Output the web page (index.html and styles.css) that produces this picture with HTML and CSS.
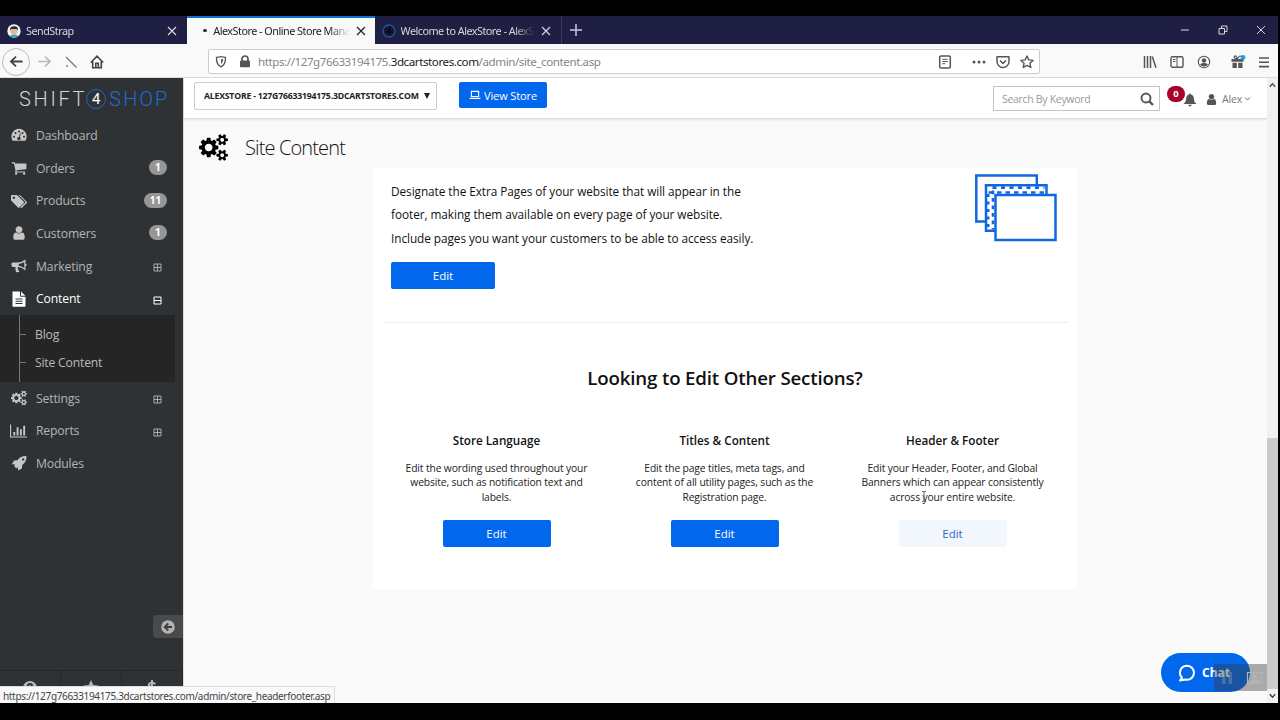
FILE: index.html
```html
<!DOCTYPE html>
<html lang="en">
  <head>
    <meta charset="UTF-8" />
    <meta name="viewport" content="width=device-width, initial-scale=1.0" />
    <title>AlexStore - Online Store Manager</title>
    <link rel="stylesheet" href="styles.css">
  </head>
  <body>
    <svg class="symbols">
      <symbol id="user" viewBox="0 0 1792 1792"><path d="M1536 1399q0 109-62.5 187t-150.5 78h-854q-88 0-150.5-78t-62.5-187q0-85 8.5-160.5t31.5-152 58.5-131 94-89 134.5-34.5q131 128 313 128t313-128q76 0 134.5 34.5t94 89 58.5 131 31.5 152 8.5 160.5zm-256-887q0 159-112.5 271.5t-271.5 112.5-271.5-112.5-112.5-271.5 112.5-271.5 271.5-112.5 271.5 112.5 112.5 271.5z"/></symbol>
      <symbol id="cart" viewBox="0 0 1792 1792"><path d="M704 1536q0 52-38 90t-90 38-90-38-38-90 38-90 90-38 90 38 38 90zm896 0q0 52-38 90t-90 38-90-38-38-90 38-90 90-38 90 38 38 90zm128-1088v512q0 24-16.5 42.5t-40.5 21.5l-1044 122q13 60 13 70 0 16-24 64h920q26 0 45 19t19 45-19 45-45 19h-1024q-26 0-45-19t-19-45q0-11 8-31.5t16-36 21.5-40 15.5-29.5l-177-823h-204q-26 0-45-19t-19-45 19-45 45-19h256q16 0 28.5 6.5t19.5 15.5 13 24.5 8 26 5.5 29.5 4.5 26h1201q26 0 45 19t19 45z"/></symbol>
      <symbol id="cogs" viewBox="0 0 1920 1792"><path d="M896 896q0-106-75-181t-181-75-181 75-75 181 75 181 181 75 181-75 75-181zm768 512q0-52-38-90t-90-38-90 38-38 90q0 53 37.5 90.5t90.5 37.5 90.5-37.5 37.5-90.5zm0-1024q0-52-38-90t-90-38-90 38-38 90q0 53 37.5 90.5t90.5 37.5 90.5-37.5 37.5-90.5zm-384 421v185q0 10-7 19.5t-16 10.5l-155 24q-11 35-32 76 34 48 90 115 7 11 7 20 0 12-7 19-23 30-82.5 89.5t-78.5 59.5q-11 0-21-7l-115-90q-37 19-77 31-11 108-23 155-7 24-30 24h-186q-11 0-20-7.5t-10-17.5l-23-153q-34-10-75-31l-118 89q-7 7-20 7-11 0-21-8-144-133-144-160 0-9 7-19 10-14 41-53t47-61q-23-44-35-82l-152-24q-10-1-17-9.5t-7-19.5v-185q0-10 7-19.5t16-10.5l155-24q11-35 32-76-34-48-90-115-7-11-7-20 0-12 7-20 22-30 82-89t79-59q11 0 21 7l115 90q34-18 77-32 11-108 23-154 7-24 30-24h186q11 0 20 7.5t10 17.5l23 153q34 10 75 31l118-89q8-7 20-7 11 0 21 8 144 133 144 160 0 8-7 19-12 16-42 54t-45 60q23 48 34 82l152 23q10 2 17 10.5t7 19.5zm640 533v140q0 16-149 31-12 27-30 52 51 113 51 138 0 4-4 7-122 71-124 71-8 0-46-47t-52-68q-20 2-30 2t-30-2q-14 21-52 68t-46 47q-2 0-124-71-4-3-4-7 0-25 51-138-18-25-30-52-149-15-149-31v-140q0-16 149-31 13-29 30-52-51-113-51-138 0-4 4-7 4-2 35-20t59-34 30-16q8 0 46 46.5t52 67.5q20-2 30-2t30 2q51-71 92-112l6-2q4 0 124 70 4 3 4 7 0 25-51 138 17 23 30 52 149 15 149 31zm0-1024v140q0 16-149 31-12 27-30 52 51 113 51 138 0 4-4 7-122 71-124 71-8 0-46-47t-52-68q-20 2-30 2t-30-2q-14 21-52 68t-46 47q-2 0-124-71-4-3-4-7 0-25 51-138-18-25-30-52-149-15-149-31v-140q0-16 149-31 13-29 30-52-51-113-51-138 0-4 4-7 4-2 35-20t59-34 30-16q8 0 46 46.5t52 67.5q20-2 30-2t30 2q51-71 92-112l6-2q4 0 124 70 4 3 4 7 0 25-51 138 17 23 30 52 149 15 149 31z"/></symbol>
      <symbol id="close" viewBox="0 0 10 10"><path d="M1 1l8 8M9 1L1 9" fill="none" stroke="currentColor" stroke-width="1.2"/></symbol>
      <symbol id="plus-box" viewBox="0 0 9 9"><path d="M1 1h7v7H1zM1 4.5h7M4.5 1v7" fill="none" stroke="currentColor" stroke-width=".9"/></symbol>
      <symbol id="minus-box" viewBox="0 0 9 9"><path d="M1 1h7v7H1zM1 4.5h7" fill="none" stroke="currentColor" stroke-width="1"/></symbol>
    </svg>

    <div class="browser">
      <div class="tabs">
        <div class="tab">
          <svg class="favicon" viewBox="0 0 14 14"><circle cx="7" cy="7" r="6.7" fill="#f4f4f4"/><path d="M2.5 12Q7 8.5 11.5 12 9.5 13.7 7 13.7T2.5 12z" fill="#3aa6b8"/><circle cx="7" cy="7" r="3.4" fill="#e8b795"/><path d="M3 7Q2.3 2.3 7 2.2T11 7L10 5H4z" fill="#2a2a30"/></svg>
          <span class="tab-title">SendStrap</span>
          <svg class="tab-close"><use href="#close"/></svg>
        </div>
        <div class="tab active">
          <span class="loading-dot"></span>
          <span class="tab-title">AlexStore - Online Store Manag</span>
          <svg class="tab-close"><use href="#close"/></svg>
        </div>
        <div class="tab">
          <svg class="favicon" viewBox="0 0 14 14"><circle cx="7" cy="7" r="6" fill="#17182f" stroke="#1c55ae" stroke-width="1.3"/><path d="M8 10.5V3.5L5 8.3h4.5" fill="none" stroke="#080812" stroke-width="1.2"/></svg>
          <span class="tab-title">Welcome to AlexStore - AlexSt</span>
          <svg class="tab-close"><use href="#close"/></svg>
        </div>
        <svg class="new-tab" viewBox="0 0 12 12"><path d="M6 0v12M0 6h12" stroke="#c9c9d2" stroke-width="1.5"/></svg>
        <div class="window-buttons">
          <svg viewBox="0 0 10 10"><path d="M1 5h8" stroke="#d6d6de"/></svg>
          <svg viewBox="0 0 10 10"><path d="M1 3.5h5.5V9H1zM3.5 3.5V1H9v5.5H6.500" fill="none" stroke="#d6d6de"/></svg>
          <svg viewBox="0 0 10 10"><path d="M1 1l8 8M9 1L1 9" stroke="#d6d6de"/></svg>
        </div>
      </div>

      <div class="toolbar">
        <div class="nav-buttons">
          <span class="back"><svg viewBox="0 0 16 16"><path d="M14.5 8H2M7.5 2.800L2 8l5.500 5.200" fill="none" stroke="#444" stroke-width="1.900"/></svg></span>
          <svg class="forward" viewBox="0 0 16 16"><path d="M1.5 8H14M8.5 2.800L14 8l-5.500 5.200" fill="none" stroke="#b8b8b8" stroke-width="1.700"/></svg>
          <svg class="stop" viewBox="0 0 14 14"><path d="M2 2l10.500 10.500" stroke="#777" stroke-width="1.300"/><circle cx="3" cy="11" r=".9" fill="#777"/></svg>
          <svg class="home" viewBox="0 0 14 14"><path d="M.8 7.500L7 1.200l6.200 6.300M2.700 6.500v6.200h8.600V6.500M5.800 12.500V8.300h2.500v4.200" fill="none" stroke="#444" stroke-width="1.600"/></svg>
        </div>
        <div class="address">
          <svg class="shield" viewBox="0 0 12 12"><path d="M1.500 1.800Q4 1.800 6 1q2 .8 4.500.8Q10.900 9 6 11.300 1.100 9 1.500 1.800z" fill="none" stroke="#555" stroke-width="1.300"/><path d="M6 3.500v5Q8 7 8.300 3.800z" fill="#555"/></svg>
          <svg class="lock" viewBox="0 0 12 13"><path d="M3 6V4a3 3 0 0 1 6 0v2" fill="none" stroke="#555" stroke-width="1.700"/><rect x="1" y="5.500" width="10" height="6.800" rx="1" fill="#555"/></svg>
          <span class="url">https://127g76633194175.<b>3dcartstores.com</b>/admin/site_content.asp</span>
          <div class="address-icons">
            <svg viewBox="0 0 14 14"><rect x="1.700" y="1" width="10.600" height="12" rx="1.300" fill="none" stroke="#555" stroke-width="1.500"/><path d="M4.300 4.300h5.400M4.300 6.500h5.400M4.300 8.700h3" stroke="#555"/></svg>
            <svg viewBox="0 0 14 14" class="dots"><circle cx="2" cy="7" r="1.500"/><circle cx="7" cy="7" r="1.500"/><circle cx="12" cy="7" r="1.500"/></svg>
            <svg viewBox="0 0 14 14"><path d="M1 1.800h12v4.700a6 6 0 0 1-12 0zM4 5.500l3 3 3-3" fill="none" stroke="#555" stroke-width="1.500" stroke-linejoin="round"/></svg>
            <svg viewBox="0 0 14 14"><path d="M7 1l1.800 3.900 4.300.5-3.200 2.900.9 4.200L7 10.400l-3.800 2.100.9-4.200L.9 5.400l4.300-.5z" fill="none" stroke="#555" stroke-width="1.400" stroke-linejoin="round"/></svg>
          </div>
        </div>
        <div class="browser-icons">
          <svg viewBox="0 0 14 14"><path d="M1.500 1v12M4.500 1v12M7.500 1v12M9.300 1.500l3.700 11.300" fill="none" stroke="#555" stroke-width="1.500"/></svg>
          <svg viewBox="0 0 14 14"><rect x="1" y="1.700" width="12" height="10.600" rx="1.500" fill="none" stroke="#555" stroke-width="1.400"/><path d="M7 2v10M3 4.500h2.500M3 6.500h2.500" stroke="#555"/></svg>
          <svg viewBox="0 0 14 14"><circle cx="7" cy="7" r="5.700" fill="none" stroke="#555" stroke-width="1.100"/><circle cx="7" cy="5.500" r="2.200" fill="#555"/><path d="M3 9.200q4-2.200 8 0Q9.800 11.500 7 11.500T3 9.200z" fill="#555"/></svg>
          <svg viewBox="0 0 16 14" class="gift"><path d="M1.500 4h12v2.800h-12zM2.500 7.800h4.300V13H2.500zM8.200 7.800h4.300V13H8.200z" fill="#555"/><path d="M7.500 4Q3 3 4.500 1.300T7.500 4q2-4 3.400-2.500" fill="none" stroke="#555" stroke-width="1.200"/><circle cx="13" cy="2.400" r="2.400" fill="#1a9fe8"/></svg>
          <svg viewBox="0 0 14 14"><path d="M2 3h10M2 7.300h10M2 11.600h10" stroke="#555" stroke-width="1.600"/></svg>
        </div>
      </div>

      <div class="page">
        <aside class="sidebar">
          <div class="logo"><span>SHIFT</span><i>4</i><span class="blue">SHOP</span></div>
          <nav class="menu">
            <a class="menu-item">
              <svg class="menu-icon" viewBox="0 0 16 16"><path d="M1.800 13.800A7.600 7.600 0 1 1 14.200 13.800z"/><g fill="#2f3234"><circle cx="3" cy="9.700" r="1"/><circle cx="4.500" cy="6" r="1"/><circle cx="8" cy="4.400" r="1"/><circle cx="11.500" cy="6" r="1"/><circle cx="13" cy="9.700" r="1"/></g><path d="M8 11.700L9.400 6.500" stroke="#2f3234" stroke-width="1"/><circle cx="7.900" cy="11.600" r="1.700" fill="#2f3234"/></svg>
              <span>Dashboard</span>
            </a>
            <a class="menu-item">
              <svg class="menu-icon"><use href="#cart"/></svg>
              <span>Orders</span><b class="count">1</b>
            </a>
            <a class="menu-item">
              <svg class="menu-icon" viewBox="0 0 16 16"><path fill-rule="evenodd" d="M0 2.700Q0 2 .8 2h4.500q.8 0 1.500.7l6 6q.7.700 0 1.400l-4.400 4.500q-.7.700-1.400 0L.8 8.300Q0 7.500 0 6.700zM2.900 3.500a1.200 1.200 0 1 0 .01 0z"/><path d="M7.500 2h.8q.7 0 1.400.7l6 6q.7.700 0 1.400l-4.500 4.500q-.6.600-1.300.2l-.5-.5 4.800-4.700q.5-.6 0-1.100z"/></svg>
              <span>Products</span><b class="count">11</b>
            </a>
            <a class="menu-item">
              <svg class="menu-icon"><use href="#user"/></svg>
              <span>Customers</span><b class="count">1</b>
            </a>
            <a class="menu-item">
              <svg class="menu-icon" viewBox="0 0 16 16"><path fill-rule="evenodd" d="M14.500 1.500v4q1.200.2 1.200 1.300t-1.200 1.300v4.400q-3.500-3-7.300-3.400-1.300 1 0 2.100-.4 1.100 1.400 2.300-1.500 1.300-3.600.4Q4 11.500 4.500 9H2Q.5 9 .5 7.500V6Q.5 4.600 2 4.600h4Q10.500 4.600 14.500 1.500zM13.300 4q-2.500 1.700-5.600 2v1.700q3 .3 5.600 2.200z"/></svg>
              <span>Marketing</span><svg class="toggle"><use href="#plus-box"/></svg>
            </a>
            <a class="menu-item current">
              <svg class="menu-icon" viewBox="0 0 16 16"><path fill-rule="evenodd" d="M1.500.5H9V5q0 .8.8.8h4.700V15q0 .8-.8.8H2.300q-.8 0-.8-.8zM10 .5l4.300 4.300H10zM4.500 7.500v1h7v-1zm0 2.300v1h7v-1zm0 2.300v1h7v-1z"/></svg>
              <span>Content</span><svg class="toggle"><use href="#minus-box"/></svg>
            </a>
            <div class="submenu">
              <a>Blog</a>
              <a>Site Content</a>
            </div>
            <a class="menu-item">
              <svg class="menu-icon"><use href="#cogs"/></svg>
              <span>Settings</span><svg class="toggle"><use href="#plus-box"/></svg>
            </a>
            <a class="menu-item">
              <svg class="menu-icon wide" viewBox="0 0 18 14"><path d="M0 0h1.200v12.800H18V14H0zM3.500 8h2v3.700h-2zM7 3h2v8.700H7zM10.500 5.200h2v6.500h-2zM14 1.500h2v10.200h-2z"/></svg>
              <span>Reports</span><svg class="toggle"><use href="#plus-box"/></svg>
            </a>
            <a class="menu-item">
              <svg class="menu-icon" viewBox="0 0 16 16"><path fill-rule="evenodd" d="M15.500 1Q9.500.8 6.500 5.200L3 5.500.8 9.300l3.200.2-.8 1.700 2 2 1.700-.8.2 3.200L10.900 13.500l.3-3.500Q15.700 7 15.500 1zM12.200 3.200a1.200 1.200 0 1 1-.01 0z"/></svg>
              <span>Modules</span>
            </a>
          </nav>
          <div class="collapse"><svg viewBox="0 0 14 14"><circle cx="7" cy="7" r="6.800" fill="#b3b3b3"/><path d="M11 7H4M7.200 3.500L3.700 7l3.500 3.500" fill="none" stroke="#3c3f41" stroke-width="1.900"/></svg></div>
          <div class="shortcuts">
            <span><svg viewBox="0 0 16 16"><path fill-rule="evenodd" d="M8 1a7 7 0 1 0 .01 0zM5 6q0-3 3-3t3 3q0 2-2.200 2.800V10H7V8q2-.7 2-2 0-1-1-1T7 6z"/></svg></span>
            <span><svg viewBox="0 0 16 16"><path d="M8 0l2.300 5 5.400.6-4 3.700 1.100 5.400L8 12l-4.800 2.700 1.100-5.400-4-3.700L5.700 5z"/></svg></span>
            <span><svg viewBox="0 0 16 16"><path d="M8 0v16M11.500 4Q8 1.700 5.500 3.500T8 7.500t2.500 4.500T4.500 11.500" fill="none" stroke="#b5b5b5" stroke-width="2"/></svg></span>
          </div>
        </aside>

        <main class="main">
          <header class="topbar">
            <div class="store-select">ALEXSTORE - 127G76633194175.3DCARTSTORES.COM <span class="caret"></span></div>
            <a class="view-store"><svg viewBox="0 0 14 12"><path d="M2.700 1.700h8.600v6.100H2.700zM.5 10h13" fill="none" stroke="#fff" stroke-width="1.400"/></svg>View Store</a>
            <div class="search">
              <span>Search By Keyword</span>
              <svg viewBox="0 0 14 14"><circle cx="6" cy="6" r="4.500" fill="none" stroke="#555" stroke-width="1.900"/><path d="M9.300 9.300l3.700 3.700" stroke="#555" stroke-width="2.400"/></svg>
            </div>
            <div class="alerts">
              <svg viewBox="0 0 14 14"><path d="M7 .5q.9 0 .9 1 3 .6 3 4.500 0 3.300 2.600 5H.5Q3.100 9.300 3.100 6q0-3.900 3-4.500 0-1 .9-1zM5.300 11.700h3.400Q8.500 13.400 7 13.400t-1.700-1.700z" fill="#555"/></svg>
              <b>0</b>
            </div>
            <div class="account">
              <svg class="person"><use href="#user"/></svg>
              <span>Alex</span>
              <svg class="chevron" viewBox="0 0 8 6"><path d="M1 1.200l3 3 3-3" fill="none" stroke="#666" stroke-width="1.100"/></svg>
            </div>
          </header>

          <div class="page-title">
            <svg><use href="#cogs"/></svg>
            <h1>Site Content</h1>
          </div>

          <section class="panel">
            <div class="extra-pages">
              <div>
                <p>Designate the Extra Pages of your website that will appear in the<br>footer, making them available on every page of your website.<br>Include pages you want your customers to be able to access easily.</p>
                <a class="btn">Edit</a>
              </div>
              <svg class="stack" viewBox="0 0 82 68">
                <g fill="#fff" stroke="#0f68e0" stroke-width="2.500">
                  <path d="M1.300 1.500h60.500v46H1.300z"/>
                  <path d="M11 11.200h60.500v45.500H11z"/>
                </g>
                <!-- zigzag edge of the middle sheet -->
                <g fill="none" stroke="#0f68e0" stroke-width="2.600">
                  <path d="M17.500 13.600h52" stroke-dasharray="4 4.500"/>
                  <path d="M13.500 18.500h56" stroke-dasharray="4.500 4"/>
                  <path d="M13.200 20v36" stroke-dasharray="3 4.500"/>
                  <path d="M18 16.500v39" stroke-dasharray="3.800 3.700"/>
                </g>
                <path d="M20.500 21h60v45h-60z" fill="#fff" stroke="#0f68e0" stroke-width="2.500"/>
              </svg>
            </div>
            <h2>Looking to Edit Other Sections?</h2>
            <div class="sections">
              <div class="section">
                <h3>Store Language</h3>
                <p>Edit the wording used throughout your<br>website, such as notification text and<br>labels.</p>
                <a class="btn">Edit</a>
              </div>
              <div class="section">
                <h3>Titles &amp; Content</h3>
                <p>Edit the page titles, meta tags, and<br>content of all utility pages, such as the<br>Registration page.</p>
                <a class="btn">Edit</a>
              </div>
              <div class="section">
                <h3>Header &amp; Footer</h3>
                <p>Edit your Header, Footer, and Global<br>Banners which can appear consistently<br>across your entire website.</p>
                <a class="btn hovered">Edit</a>
              </div>
            </div>
          </section>
        </main>

        <div class="scrollbar">
          <svg viewBox="0 0 8 6"><path d="M1 5l3-3.500L7 5" fill="none" stroke="#444" stroke-width="1.500"/></svg>
          <span class="thumb"></span>
          <svg viewBox="0 0 8 6"><path d="M1 1l3 3.500L7 1" fill="none" stroke="#333" stroke-width="1.500"/></svg>
        </div>
      </div>

      <div class="status">https://127g76633194175.3dcartstores.com/admin/store_headerfooter.asp</div>
      <div class="chat">
        <svg viewBox="0 0 18 18"><path d="M4 13.700A7 7 0 1 1 7.500 15.600L2 16.500z" fill="none" stroke="#fff" stroke-width="2" stroke-linejoin="round"/></svg>
        <span>Chat</span>
      </div>
      <div class="recorder">
        <svg viewBox="0 0 12 14"><path d="M1 1h3.500v12H1zM7.500 1H11v12H7.500z" fill="#94a0b5" opacity=".4"/></svg>
        <svg viewBox="0 0 18 14"><path d="M1.500 1.500h14v11h-14z" fill="none" stroke="#b4b4b4" stroke-width="1.200"/><path d="M3 12l3-3.500h5l3 3.500z" fill="#b4b4b4"/><circle cx="8.500" cy="5.500" r="2.300" fill="#b4b4b4"/></svg>
      </div>
      <svg class="cursor" viewBox="0 0 6 12"><path d="M1 1h1.500L3 1.700 3.500 1H5M3 1.500v9M1 11h1.500l.5-.7.5.7H5" fill="none" stroke="#555" stroke-width=".9"/></svg>
    </div>
  </body>
</html>
```
FILE: styles.css
```css
* {
  box-sizing: border-box;
}

body {
  margin: 0;
  height: 720px;
  padding-top: 16px;
  overflow: hidden;
  background: #000;
  color: #111;
  font-family: "Open Sans", sans-serif;
}

svg {
  display: block;
  flex: none;
}

.symbols {
  position: absolute;
  width: 0;
  height: 0;
}

.browser {
  position: relative;
  display: flex;
  flex-direction: column;
  width: 1278px;
  height: 687px;
  overflow: hidden;
  background: #f9f9fa;
}

/* tabs */
.tabs {
  display: flex;
  align-items: center;
  flex: none;
  height: 28px;
  background: #1e1f42;
  font-family: "Noto Sans", sans-serif;
  font-size: 10.8px;
  letter-spacing: -0.5px;
}

.tab {
  display: flex;
  align-items: center;
  flex: none;
  width: 187.3px;
  height: 28px;
  padding: 1px 10px 0 7px;
  color: #d6d6de;
}

.tab + .tab {
  border-right: 1px solid #3b3c5c;
}

.tab.active {
  border-top: 2px solid #1273cf;
  border-right: 0;
  padding: 0 9px 1px 7px;
  background: #f9f9fa;
  color: #222;
}

.favicon {
  width: 14px;
  height: 14px;
  margin-right: 5px;
}

.loading-dot {
  flex: none;
  width: 4px;
  height: 3px;
  margin: 0 6px 0 9px;
  border-radius: 2px;
  background: #333;
}

.tab-title {
  flex: 1;
  min-width: 0;
  white-space: nowrap;
  mask-image: linear-gradient(to right, #000 85%, transparent);
}

.tab-close {
  width: 10px;
  height: 10px;
  margin-left: 6px;
}

.new-tab {
  width: 12px;
  height: 12px;
  margin: 0 0 0 8px;
}

.window-buttons {
  display: flex;
  gap: 28px;
  margin-left: auto;
  padding-right: 12px;
}

.window-buttons svg {
  width: 10px;
  height: 10px;
}

/* toolbar */
.toolbar {
  display: flex;
  align-items: center;
  flex: none;
  height: 34px;
  padding-top: 2px;
  border-bottom: 1px solid #ddd;
}

.nav-buttons {
  display: flex;
  align-items: center;
  width: 208px;
  padding-left: 2px;
}

.back {
  display: flex;
  align-items: center;
  justify-content: center;
  width: 28px;
  height: 28px;
  border: 1px solid #bbb;
  border-radius: 50%;
}

.back svg,
.forward {
  width: 15px;
  height: 15px;
}

.forward {
  margin-left: 7px;
}

.stop {
  width: 14px;
  height: 14px;
  margin-left: 12px;
}

.home {
  width: 14px;
  height: 14px;
  margin-left: 12px;
}

.address {
  display: flex;
  align-items: center;
  width: 832px;
  height: 25px;
  padding: 0 5px 0 6px;
  border: 1px solid #ccc;
  border-radius: 2px;
  background: #fff;
}

.shield {
  width: 12px;
  height: 13px;
}

.lock {
  width: 12px;
  height: 13px;
  margin-left: 12px;
}

.url {
  margin-left: 7px;
  color: #858585;
  font-family: "Noto Sans", sans-serif;
  font-size: 11.6px;
  letter-spacing: -0.43px;
  white-space: nowrap;
}

.url b {
  color: #222;
  font-weight: 400;
}

.address-icons {
  display: flex;
  gap: 10px;
  margin-left: auto;
}

.address-icons svg {
  width: 14px;
  height: 14px;
}

.address-icons .dots {
  margin-left: 10px;
  fill: #555;
}

.browser-icons {
  display: flex;
  gap: 13px;
  margin-left: auto;
  padding-right: 7px;
}

.browser-icons svg {
  width: 14px;
  height: 14px;
}

.browser-icons .gift {
  width: 16px;
  margin: 0 -2px 0 6px;
}

/* page */
.page {
  display: flex;
  flex: 1;
  min-height: 0;
}

.sidebar {
  display: flex;
  flex-direction: column;
  width: 184px;
  border-right: 1px solid #ddd;
  background: #2f3234;
}

.logo {
  display: flex;
  align-items: center;
  height: 41px;
  padding: 1px 0 0 19px;
  color: #d5d5d5;
  font-family: Roboto, sans-serif;
  font-size: 20px;
  font-weight: 300;
  letter-spacing: 2.7px;
}

.logo i {
  flex: none;
  width: 20px;
  height: 20px;
  margin: 0 3px 0 -1px;
  border: 1.5px solid #1c64c8;
  border-radius: 50%;
  color: #fff;
  font-size: 15px;
  font-style: normal;
  font-weight: 400;
  line-height: 18px;
  letter-spacing: 0;
  text-align: center;
}

.logo .blue {
  color: #1c6bd8;
  letter-spacing: 2.1px;
}

.menu-item {
  display: flex;
  align-items: center;
  height: 32.7px;
  padding: 0 17px 0 11px;
  color: #b5b5b5;
  font-size: 12.2px;
  letter-spacing: -0.15px;
}

.menu-item span {
  flex: 1;
}

.menu-icon {
  width: 16px;
  height: 16px;
  margin-right: 9px;
  fill: #c8c5c5;
}

.menu-icon.wide {
  width: 17px;
  height: 14px;
  margin: 0 9px 0 -1px;
}

.menu-item.current {
  color: #fff;
}

.current .menu-icon {
  fill: #fff;
}

.count {
  min-width: 18px;
  height: 15px;
  padding: 0 6px;
  margin: -1px -1px 0 0;
  border-radius: 8px;
  background: #969696;
  color: #fff;
  font-size: 10px;
  line-height: 15px;
}

.toggle {
  width: 9px;
  height: 9px;
  margin: 3px 4px 0 0;
}

.submenu {
  width: 175px;
  height: 66.6px;
  padding: 6px 0 6px 19px;
  background: linear-gradient(#777, #777) 19px 0 / 1px 100% no-repeat #252525;
}

.submenu a {
  display: flex;
  align-items: center;
  height: 27.5px;
  color: #b9b9b9;
  font-size: 12.2px;
  letter-spacing: -0.2px;
}

.submenu a::before {
  content: "";
  width: 7px;
  height: 1px;
  margin-right: 9px;
  background: #777;
}

.collapse {
  width: 30px;
  height: 23px;
  margin: auto 0 32px auto;
  padding: 5px 0 0 8px;
  border-radius: 4px 0 0 4px;
  background: #484a4b;
}

.collapse svg {
  width: 14px;
  height: 14px;
}

.shortcuts {
  display: flex;
  height: 33px;
  border-top: 1px solid #25282a;
}

.shortcuts span {
  flex: 1;
  padding: 9px 0 0 22px;
  border-right: 1px solid #25282a;
}

.shortcuts svg {
  width: 16px;
  height: 16px;
  fill: #b5b5b5;
}

.main {
  flex: 1;
  background: #fafafa;
}

.topbar {
  display: flex;
  height: 41px;
  padding: 4px 16px 0 10px;
  border-bottom: 1px solid #ddd;
  background: #fff;
  box-shadow: 0 1px 2px rgba(0, 0, 0, 0.1);
}

.store-select {
  display: flex;
  align-items: center;
  justify-content: space-between;
  width: 243px;
  height: 28px;
  padding: 0 6px 0 9px;
  border: 1px solid #ccc;
  border-radius: 2px;
  color: #222;
  font-size: 8.7px;
  font-weight: 700;
  letter-spacing: -0.2px;
  white-space: nowrap;
}

.caret {
  border: 3px solid transparent;
  border-top: 6px solid #222;
  border-bottom: 0;
}

.view-store {
  display: flex;
  align-items: center;
  justify-content: center;
  gap: 3px;
  width: 88px;
  height: 26px;
  margin-left: 22px;
  border-radius: 2px;
  background: #0167ec;
  color: #fff;
  font-size: 11px;
  letter-spacing: -0.1px;
}

.view-store svg {
  width: 12px;
  height: 10px;
}

.search {
  display: flex;
  align-items: center;
  justify-content: space-between;
  width: 167px;
  height: 25px;
  margin: 4px 0 0 auto;
  padding: 0 5px 0 8px;
  border: 1px solid #c4c4c4;
  color: #999;
  font-size: 10.5px;
  letter-spacing: -0.3px;
}

.search svg {
  width: 14px;
  height: 14px;
  margin-top: 1px;
}

.alerts {
  position: relative;
  width: 38px;
  padding: 11px 0 0 23px;
}

.alerts svg {
  width: 14px;
  height: 14px;
}

.alerts b {
  position: absolute;
  left: 7px;
  top: 4px;
  width: 18px;
  height: 16px;
  border-radius: 8px;
  background: #a6002b;
  color: #fff;
  font-size: 9.5px;
  line-height: 16px;
  text-align: center;
}

.account {
  display: flex;
  align-items: center;
  height: 34px;
  padding-left: 7px;
  color: #777;
  font-size: 10.6px;
  letter-spacing: -0.2px;
}

.account .person {
  width: 13px;
  height: 13px;
  margin-right: 4px;
  fill: #555;
}

.chevron {
  width: 7px;
  height: 6px;
  margin-left: 2px;
}

.page-title {
  display: flex;
  align-items: center;
  height: 49px;
  padding: 7px 0 0 15px;
}

.page-title svg {
  width: 29px;
  height: 27px;
}

.page-title h1 {
  margin: 0 0 0 17px;
  font-size: 20px;
  font-weight: 300;
  letter-spacing: -0.87px;
}

.panel {
  width: 704px;
  height: 421px;
  margin-left: 189px;
  padding: 0 8px 0 11px;
  background: #fff;
}

.extra-pages {
  display: flex;
  justify-content: space-between;
  height: 155px;
  padding: 12px 12px 0 7px;
  border-bottom: 1px solid #eee;
}

.extra-pages p {
  margin: 0 0 12px;
  font-size: 11.8px;
  line-height: 23.4px;
  letter-spacing: -0.055px;
}

.extra-pages .btn {
  width: 104px;
}

.stack {
  width: 82px;
  height: 68px;
  margin-top: -6px;
}

.btn {
  display: block;
  height: 27px;
  border-radius: 2px;
  background: #0167ec;
  color: #fff;
  font-size: 11.5px;
  line-height: 27px;
  text-align: center;
}

.panel h2 {
  margin: 41px 3px 0 0;
  font-size: 18.7px;
  font-weight: 600;
  line-height: 28px;
  letter-spacing: -0.17px;
  text-align: center;
}

.sections {
  display: grid;
  grid-template-columns: repeat(3, 1fr);
  gap: 1px;
  width: 683px;
  margin: 38px 0 0 -1px;
  text-align: center;
}

.section h3 {
  margin: 0 0 11px;
  font-size: 11.7px;
  font-weight: 600;
  line-height: 20px;
}

.section p {
  margin: 0;
  font-size: 10.3px;
  line-height: 14.3px;
  letter-spacing: -0.13px;
  color: #222;
}

.section .btn {
  width: 108px;
  margin: 16px auto 0;
}

.btn.hovered {
  background: #f2f6fd;
  color: #2a6ebb;
}

.scrollbar {
  display: flex;
  flex-direction: column;
  align-items: center;
  width: 11px;
  padding: 4px 0;
  background: #f0f0f0;
}

.scrollbar svg {
  width: 7px;
  height: 6px;
}

.thumb {
  width: 11px;
  height: 251px;
  margin: auto 0 4px;
  background: #cbcbcb;
}

/* overlays */
.status {
  position: absolute;
  left: 0;
  bottom: 0;
  width: 335px;
  height: 17px;
  padding-left: 3px;
  border-top: 1px solid #ddd;
  border-right: 1px solid #ddd;
  background: #f9f9fa;
  color: #444;
  font-family: "Noto Sans", sans-serif;
  font-size: 10px;
  line-height: 18px;
  letter-spacing: -0.34px;
  white-space: nowrap;
}

.chat {
  position: absolute;
  right: 28px;
  bottom: 11px;
  display: flex;
  align-items: center;
  gap: 6px;
  width: 89px;
  height: 39px;
  padding-left: 17px;
  border-radius: 20px;
  background: #0167ec;
  color: #fff;
  font-family: "Noto Sans", sans-serif;
  font-size: 12px;
  font-weight: 700;
}

.chat svg {
  width: 18px;
  height: 18px;
}

.recorder {
  position: absolute;
  right: 11px;
  bottom: 12px;
  display: flex;
  align-items: center;
  gap: 13px;
  width: 53px;
  height: 27px;
  padding-left: 7px;
  background: rgba(60, 60, 60, 0.42);
}

.recorder svg {
  width: 12px;
  height: 14px;
}

.recorder svg + svg {
  width: 18px;
}

.cursor {
  position: absolute;
  left: 921px;
  top: 474px;
  width: 6px;
  height: 13px;
}
```
